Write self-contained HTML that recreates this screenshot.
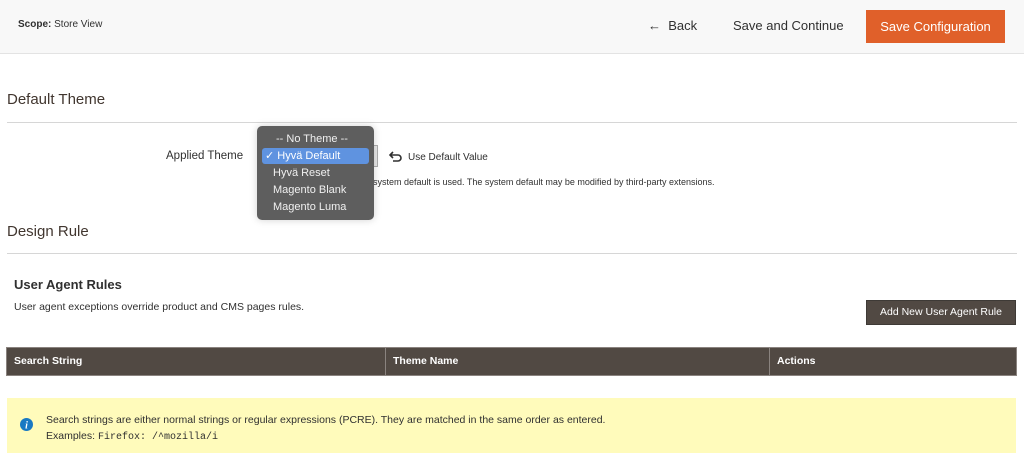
<!DOCTYPE html>
<html><head><meta charset="utf-8"><style>
*{margin:0;padding:0;box-sizing:border-box}
body{width:1024px;height:463px;background:#fff;font-family:"Liberation Sans",sans-serif;color:#303030;position:relative;overflow:hidden}
.a{position:absolute;white-space:nowrap}
</style></head><body>
<div class="a" style="left:0;top:0;width:1024px;height:54px;background:#f8f8f8;border-bottom:1px solid #e3e3e3"></div>
<div class="a" style="left:18px;top:19px;font-size:10px"><b>Scope:</b> Store View</div>
<div class="a" style="left:648px;top:18px;font-size:13px;color:#303030">&#8592;&nbsp; Back</div>
<div class="a" style="left:733px;top:18px;font-size:13px">Save and Continue</div>
<div class="a" style="left:866px;top:10px;width:139px;height:33px;background:#e0602a;color:#fff;font-size:13px;text-align:center;line-height:33px">Save Configuration</div>

<div class="a" style="left:7px;top:91px;font-size:15px;color:#41362f">Default Theme</div>
<div class="a" style="left:7px;top:122px;width:1010px;height:1px;background:#d6d6d6"></div>
<div class="a" style="left:166px;top:150px;font-size:11.5px;color:#303030">Applied Theme</div>
<div class="a" style="left:360px;top:145px;width:18px;height:22px;background:#e8e8e8;border:1px solid #adadad"></div>
<svg class="a" style="left:389px;top:151px" width="14" height="11" viewBox="0 0 14 11"><path d="M4 1 L1 4 L4 7 M1 4 H9 a3 3 0 0 1 0 6 H4" fill="none" stroke="#303030" stroke-width="1.6"/></svg>
<div class="a" style="left:408px;top:152px;font-size:10px">Use Default Value</div>
<div class="a" style="left:373px;top:177px;font-size:9px;color:#303030">system default is used. The system default may be modified by third-party extensions.</div>
<div class="a" style="left:257px;top:126px;width:117px;height:94px;background:#5e5e5e;border-radius:5px;box-shadow:0 0 8px rgba(0,0,0,.18);color:#f0f0f0;font-size:11px">
 <div class="a" style="left:19px;top:7px">-- No Theme --</div>
 <div class="a" style="left:5px;top:22px;width:107px;height:16px;background:#5f93e0;border-radius:3px;color:#fff;padding-left:3px;line-height:16px">&#10003; Hyvä Default</div>
 <div class="a" style="left:16px;top:41px">Hyvä Reset</div>
 <div class="a" style="left:16px;top:58px">Magento Blank</div>
 <div class="a" style="left:16px;top:75px">Magento Luma</div>
</div>

<div class="a" style="left:7px;top:223px;font-size:15px;color:#41362f">Design Rule</div>
<div class="a" style="left:7px;top:253px;width:1010px;height:1px;background:#d6d6d6"></div>
<div class="a" style="left:14px;top:277px;font-size:13px;font-weight:bold;color:#303030">User Agent Rules</div>
<div class="a" style="left:14px;top:301px;font-size:10.5px">User agent exceptions override product and CMS pages rules.</div>
<div class="a" style="left:866px;top:300px;width:150px;height:25px;background:#514943;border:1px solid #3e3a36;color:#fff;font-size:10.5px;text-align:center;line-height:23px">Add New User Agent Rule</div>

<div class="a" style="left:6px;top:347px;width:1011px;height:29px;background:#514943;border:1px solid #8a837f"></div>
<div class="a" style="left:385px;top:348px;width:1px;height:27px;background:#8a837f"></div>
<div class="a" style="left:769px;top:348px;width:1px;height:27px;background:#8a837f"></div>
<div class="a" style="left:14px;top:355px;font-size:10.5px;color:#fff;font-weight:bold">Search String</div>
<div class="a" style="left:393px;top:355px;font-size:10.5px;color:#fff;font-weight:bold">Theme Name</div>
<div class="a" style="left:777px;top:355px;font-size:10.5px;color:#fff;font-weight:bold">Actions</div>

<div class="a" style="left:7px;top:398px;width:1009px;height:55px;background:#fffbbb"></div>
<svg class="a" style="left:20px;top:418px" width="13" height="13" viewBox="0 0 13 13"><circle cx="6.5" cy="6.5" r="6.5" fill="#1979c3"/><text x="6.5" y="10.5" font-size="10" font-weight="bold" font-style="italic" fill="#fff" text-anchor="middle" font-family="Liberation Serif,serif">i</text></svg>
<div class="a" style="left:46px;top:412px;font-size:10.5px;line-height:16px">Search strings are either normal strings or regular expressions (PCRE). They are matched in the same order as entered.<br>Examples: <span style="font-family:'Liberation Mono',monospace;font-size:10px">Firefox: /^mozilla/i</span></div>
</body></html>
